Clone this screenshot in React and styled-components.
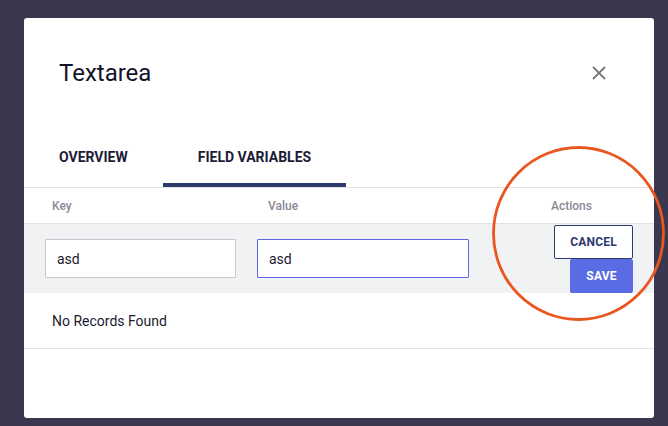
import React from "react";
import styled, { createGlobalStyle } from "styled-components";

const Global = createGlobalStyle`
  html, body { margin: 0; padding: 0; }
  body {
    background: #3a384f;
    font-family: Roboto, "Liberation Sans", Arial, sans-serif;
    width: 668px;
    height: 426px;
    overflow: hidden;
  }
`;

const Page = styled.div`
  position: relative;
  width: 668px;
  height: 426px;
  padding: 18px 14px 8px 24px;
  box-sizing: border-box;
`;

const Modal = styled.div`
  background: #fff;
  border-radius: 3px;
  height: 400px;
  display: flex;
  flex-direction: column;
`;

const Header = styled.div`
  display: flex;
  align-items: center;
  justify-content: space-between;
  padding: 40px 48px 0 35px;
  height: 30px;
`;

const Title = styled.h2`
  margin: 0;
  font-size: 24px;
  font-weight: 400;
  line-height: 30px;
  color: #14132b;
`;

const CloseBtn = styled.button`
  border: 0;
  background: none;
  padding: 0;
  width: 14px;
  height: 14px;
  display: flex;
  cursor: pointer;
`;

const Tabs = styled.div`
  display: flex;
  margin-top: 51px;
  border-bottom: 1px solid #e2e2e6;
`;

const Tab = styled.div`
  padding: 10px 35px 0;
  height: 34px;
  font-size: 14px;
  font-weight: 700;
  line-height: 16px;
  color: #1d1b36;
  border-bottom: 4px solid ${(p) => (p.$active ? "#2d3a6e" : "transparent")};
`;

const HeadRow = styled.div`
  display: flex;
  align-items: center;
  height: 35px;
  border-bottom: 1px solid #e2e2e6;
  font-size: 12px;
  font-weight: 500;
  color: #8a8a96;
`;

const HeadCell = styled.div`
  width: ${(p) => p.$w}px;
  padding-left: ${(p) => p.$pl}px;
  box-sizing: border-box;
`;

const DataRow = styled.div`
  display: flex;
  align-items: center;
  height: 69px;
  background: #f1f2f4;
  padding: 0 21px;
  gap: 21px;
`;

const Input = styled.input`
  width: ${(p) => p.$w}px;
  height: 39px;
  box-sizing: border-box;
  border: 1px solid ${(p) => (p.$focus ? "#5b6ae0" : "#c6c6cb")};
  border-radius: 1px;
  background: #fff;
  padding: 0 11px;
  font-family: Roboto, "Liberation Sans", Arial, sans-serif;
  font-size: 14px;
  color: #1b1a30;
  outline: none;
`;

const Actions = styled.div`
  flex: 1;
  display: flex;
  flex-direction: column;
  align-items: flex-end;
  padding-top: 1px;
`;

const Btn = styled.button`
  box-sizing: border-box;
  width: ${(p) => p.$w}px;
  height: ${(p) => p.$h}px;
  border-radius: 2px;
  font-family: Roboto, "Liberation Sans", Arial, sans-serif;
  font-size: 12px;
  font-weight: 700;
  letter-spacing: 0.2px;
  cursor: pointer;
  border: 1px solid ${(p) => (p.$primary ? "#5a6ce3" : "#2d3a6e")};
  background: ${(p) => (p.$primary ? "#5a6ce3" : "#fff")};
  color: ${(p) => (p.$primary ? "#fff" : "#2d3a6e")};
`;

const EmptyRow = styled.div`
  height: 55px;
  display: flex;
  align-items: center;
  padding-left: 28px;
  font-size: 14px;
  color: #1b1a30;
  border-bottom: 1px solid #e2e2e6;
`;

const Highlight = styled.svg`
  position: absolute;
  left: 492px;
  top: 146px;
  pointer-events: none;
`;

export default function App() {
  return (
    <>
      <Global />
      <Page>
        <Modal>
          <Header>
            <Title>Textarea</Title>
            <CloseBtn aria-label="close">
              <svg width="14" height="14" viewBox="0 0 14 14">
                <path d="M1 1L13 13M13 1L1 13" stroke="#76767e" strokeWidth="1.8" />
              </svg>
            </CloseBtn>
          </Header>
          <Tabs>
            <Tab>OVERVIEW</Tab>
            <Tab $active>FIELD VARIABLES</Tab>
          </Tabs>
          <HeadRow>
            <HeadCell $w={244} $pl={28}>Key</HeadCell>
            <HeadCell $w={283} $pl={0}>Value</HeadCell>
            <HeadCell $w={80} $pl={0}>Actions</HeadCell>
          </HeadRow>
          <DataRow>
            <Input $w={191} defaultValue="asd" />
            <Input $w={212} $focus defaultValue="asd" />
            <Actions>
              <Btn $w={79} $h={34}>CANCEL</Btn>
              <Btn $w={63} $h={34} $primary>SAVE</Btn>
            </Actions>
          </DataRow>
          <EmptyRow>No Records Found</EmptyRow>
        </Modal>
        <Highlight width="176" height="178" viewBox="0 0 176 178">
          <ellipse cx="86.5" cy="87.5" rx="85" ry="86" fill="none" stroke="#e9561f" strokeWidth="2.8" />
        </Highlight>
      </Page>
    </>
  );
}
